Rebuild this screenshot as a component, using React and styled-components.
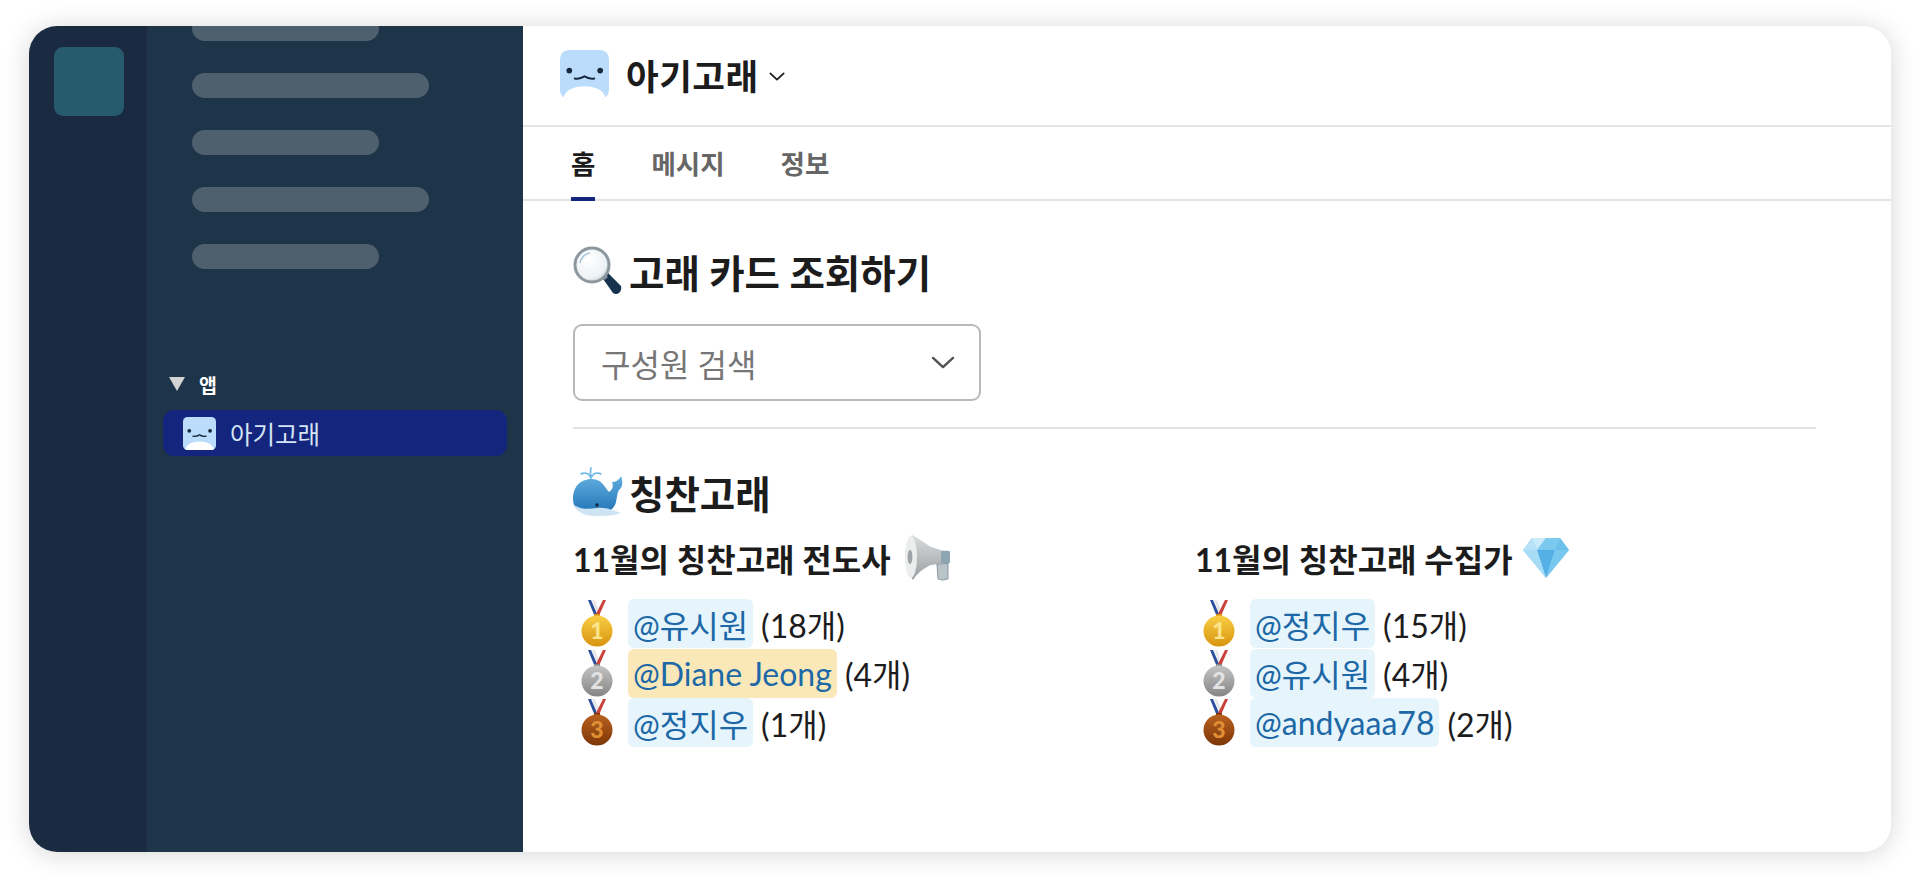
import React from "react";
import styled, { createGlobalStyle } from "styled-components";

const Global = createGlobalStyle`
  html, body { margin: 0; padding: 0; background: #fff; }
  body { font-family: Lato, "Noto Sans CJK KR", sans-serif; color: #1d1c1d; }
  * { box-sizing: border-box; }
`;
const Page = styled.div`
  width: 1920px; height: 884px; padding: 26px 29px 32px; overflow: hidden;
`;
const Win = styled.div`
  width: 1862px; height: 826px; display: flex; overflow: hidden; border-radius: 28px;
  background: #fff; box-shadow: 0 2px 26px rgba(0,0,0,.17);
`;
const Rail = styled.div`
  width: 118px; flex: none; background: #1a2a40; padding: 21px 0 0 25px;
`;
const Tile = styled.div`
  width: 70px; height: 69px; border-radius: 9px; background: #285a6e;
`;
const Side = styled.div`
  width: 376px; flex: none; background: #1e3448; display: flex; flex-direction: column;
`;
const Bars = styled.div`
  display: flex; flex-direction: column; gap: 32px; margin: -10px 0 0 45px;
`;
const Bar = styled.div`
  height: 25px; border-radius: 12.5px; background: #4e5f6e; width: ${p => p.$w}px;
`;
const AppHead = styled.div`
  display: flex; align-items: center; gap: 14px; margin: 103px 0 0 22px; height: 24px;
  color: #fff; font-size: 19.5px; font-weight: 700;
`;
const Tri = styled.span`
  width: 0; height: 0; border-left: 8px solid transparent; border-right: 8px solid transparent;
  border-top: 14px solid #d4d4d4;
`;
const AppRow = styled.div`
  display: flex; align-items: center; gap: 14px; height: 46px; margin: 14px 16px 0 16px;
  padding-left: 20px; border-radius: 11px; background: #14257d; color: #d5e4f3; font-size: 24.5px;
`;
const Main = styled.div`
  flex: 1; min-width: 0; background: #fff; display: flex; flex-direction: column;
`;
const Header = styled.div`
  height: 101px; flex: none; display: flex; align-items: center; padding: 0 0 2px 37px; gap: 17px;
  border-bottom: 2px solid #e4e4e4;
`;
const Title = styled.div`
  font-size: 35.5px; font-weight: 700; color: #1d1c1d; letter-spacing: .5px;
`;
const Caret = styled.span`
  display: flex; margin: 4px 0 0 -7px;
`;
const Tabs = styled.div`
  height: 74px; flex: none; display: flex; gap: 56px; padding-left: 48px; border-bottom: 2px solid #e4e4e4;
`;
const Tab = styled.div`
  height: 74px; display: flex; align-items: center; font-size: 26.5px; font-weight: 700;
  color: ${p => p.$on ? "#1d1c1d" : "#666"};
  border-bottom: 4px solid ${p => p.$on ? "#14257d" : "transparent"};
`;
const Body = styled.div`
  padding: 45px 75px 0 50px; display: flex; flex-direction: column;
`;
const Heading = styled.div`
  display: flex; align-items: center; gap: 6px; height: 50px;
  font-size: 38.5px; font-weight: 700; color: #1d1c1d;
`;
const Select = styled.div`
  width: 408px; height: 77px; margin-top: 28px; border: 2px solid #b9b9b9; border-radius: 9px;
  display: flex; align-items: center; justify-content: space-between; padding: 0 24px 0 26px;
  font-size: 32px; color: #767676;
`;
const Rule = styled.div`
  height: 2px; background: #e2e2e2; margin-top: 26px;
`;
const Second = styled(Heading)`
  margin-top: 38px;
`;
const Cols = styled.div`
  display: grid; grid-template-columns: 622px 1fr; margin-top: 18px;
`;
const Col = styled.div`
  display: flex; flex-direction: column;
`;
const ColHead = styled.div`
  display: flex; align-items: center; gap: 9px; height: 46px;
  font-size: 32px; font-weight: 700; color: #1d1c1d; white-space: nowrap;
`;
const List = styled.div`
  display: flex; flex-direction: column; margin-top: 18px;
`;
const Row = styled.div`
  display: flex; align-items: center; height: 49.5px; font-size: 32px; color: #1d1c1d; white-space: nowrap;
`;
const MedalSlot = styled.span`
  width: 55px; padding-left: 8px; flex: none; display: flex;
`;
const Mention = styled.span`
  display: inline-flex; align-items: center; height: 49px; padding: 0 5px; margin-right: 8px; border-radius: 6px;
  color: #1d68a6; background: ${p => p.$me ? "#fbe8b9" : "#e6f5fb"};
`;
const Icon = styled.svg`
  flex: none;
`;
const HornIcon = styled(Icon)`
  margin-left: 4px;
`;

const Face = ({ size, round }) => (
  <Icon width={size} height={size} viewBox="0 0 50 50">
    <defs>
      <clipPath id={`fc${size}`}><rect width="50" height="50" rx={round} /></clipPath>
    </defs>
    <g clipPath={`url(#fc${size})`}>
      <rect width="50" height="50" fill="#bcdcfb" />
      <path d="M3 50 C5 41 14 37 25 37 C36 37 45 41 47 50Z" fill="#fff" />
    </g>
    <circle cx="9.5" cy="21" r="2.9" fill="#15283d" />
    <circle cx="41" cy="21" r="2.9" fill="#15283d" />
    <path d="M15 29 Q20 30 25 27 Q30 30 35 29" fill="none" stroke="#15283d" strokeWidth="2" strokeLinecap="round" />
  </Icon>
);
const Chev = ({ w, h, sw, color }) => (
  <Icon width={w} height={h} viewBox="0 0 24 14" preserveAspectRatio="none">
    <path d="M2 2 L12 12 L22 2" fill="none" stroke={color} strokeWidth={sw} strokeLinecap="round" strokeLinejoin="round" />
  </Icon>
);
const Lens = () => (
  <Icon width="50" height="50" viewBox="0 0 50 50">
    <defs>
      <radialGradient id="lg" cx=".4" cy=".35" r=".75">
        <stop offset="0" stopColor="#fff" /><stop offset=".7" stopColor="#eef2f5" /><stop offset="1" stopColor="#b8c4cc" />
      </radialGradient>
    </defs>
    <path d="M28 30 L33 25 L48 40 Q49 44 46 47 Q43 49 40 47Z" fill="#17324f" />
    <path d="M27 29 L30 26 L35 31 L32 34Z" fill="#7d8a93" />
    <circle cx="19" cy="19" r="17" fill="url(#lg)" stroke="#8c979e" strokeWidth="3" />
    <path d="M7 17 A12 12 0 0 1 17 7" fill="none" stroke="#6fa4c2" strokeWidth="1.5" opacity=".6" />
  </Icon>
);
const Whale = () => (
  <Icon width="50" height="50" viewBox="0 0 50 50">
    <defs>
      <linearGradient id="wg" x1="0" y1="0" x2="0" y2="1">
        <stop offset="0" stopColor="#62aee0" /><stop offset="1" stopColor="#1f73b5" />
      </linearGradient>
    </defs>
    <path d="M18 11 Q15 4 8 7 M18 11 Q17 5 18 1 M18 11 Q21 4 28 7" fill="none" stroke="#6fbbe6" strokeWidth="1.8" strokeLinecap="round" strokeDasharray="3 1.5" />
    <path d="M0 32 C0 18 9 12 19 12 C29 12 32 21 36 25 C39 23 41 20 39 15 C43 15 46 13 48 9 C50 14 50 20 46 23 C44 26 44 31 43 35 C41 44 32 47 22 47 C8 47 0 43 0 32Z" fill="url(#wg)" />
    <path d="M1 38 C8 43 17 42 24 41 C30 40 38 42 48 46 C40 49 30 49 22 49 C11 49 4 45 1 38Z" fill="#cfe4f3" />
    <circle cx="24" cy="38" r="1.7" fill="#12263a" />
  </Icon>
);
const Horn = () => (
  <HornIcon width="48" height="48" viewBox="0 0 48 46" preserveAspectRatio="none">
    <defs>
      <linearGradient id="hg" x1="0" y1="0" x2="0" y2="1">
        <stop offset="0" stopColor="#d9dcdd" /><stop offset="1" stopColor="#9a9fa1" />
      </linearGradient>
    </defs>
    <path d="M8 1 Q14 4 26 12 L45 18 L45 27 L26 30 Q14 36 9 44 Q1 34 1 22 Q1 8 8 1Z" fill="url(#hg)" />
    <ellipse cx="7" cy="22" rx="6" ry="20" fill="#eceeee" />
    <ellipse cx="6" cy="22" rx="2.4" ry="7" fill="#9ea3a5" />
    <rect x="37" y="16" width="9" height="12" rx="1.5" fill="#8ea6b3" />
    <path d="M33 29 L44 28 L44 43 Q38 45 34 43Z" fill="#b9c4c9" stroke="#8b979d" strokeWidth="1" />
  </HornIcon>
);
const Gem = () => (
  <Icon width="48" height="42" viewBox="0 0 48 42">
    <path d="M10 1 L38 1 L47 13 L24 41 L1 13Z" fill="#8fd0f2" />
    <path d="M10 1 L1 13 L15 13Z" fill="#b6e2f8" />
    <path d="M38 1 L47 13 L33 13Z" fill="#6cc0ec" />
    <path d="M15 13 L33 13 L24 41Z" fill="#55b0e6" />
    <path d="M1 13 L15 13 L24 41Z" fill="#a6dcf6" />
    <path d="M33 13 L47 13 L24 41Z" fill="#79c8ef" />
    <path d="M10 1 L24 1 L15 13Z" fill="#c9ebfb" />
    <path d="M24 1 L38 1 L33 13 L15 13Z" fill="#7cc9f0" />
  </Icon>
);
const medals = {
  1: ["#f8cf45", "#d9930f", "#fbe48a"],
  2: ["#c4c4c4", "#858585", "#e2e2e2"],
  3: ["#b8621f", "#7d3607", "#e08f35"],
};
const Medal = ({ n, id }) => {
  const [a, b, t] = medals[n];
  return (
    <Icon width="32" height="47" viewBox="0 0 32 47">
      <defs>
        <linearGradient id={id} x1="0" y1="0" x2="0" y2="1">
          <stop offset="0" stopColor={a} /><stop offset="1" stopColor={b} />
        </linearGradient>
      </defs>
      <path d="M7 0 L10 0 L17 16 L14 17Z" fill="#2b4f9c" />
      <path d="M11 0 L14 0 L18 10 L16 13Z" fill="#e8e8e8" />
      <path d="M25 0 L22 0 L14 16 L17 18Z" fill="#c9413a" />
      <rect x="13" y="14" width="6" height="4" fill={b} />
      <circle cx="16" cy="31" r="15.5" fill={`url(#${id})`} />
      <text x="16" y="39" textAnchor="middle" fontFamily="Lato, sans-serif" fontWeight="900" fontSize="23" fill={t}>{n}</text>
    </Icon>
  );
};

const Entry = ({ n, id, name, count, me }) => (
  <Row>
    <MedalSlot><Medal n={n} id={id} /></MedalSlot>
    <Mention $me={me}>{name}</Mention>
    <span>({count}개)</span>
  </Row>
);

export default function App() {
  return (
    <Page>
      <Global />
      <Win>
        <Rail><Tile /></Rail>
        <Side>
          <Bars>
            <Bar $w={187} /><Bar $w={237} /><Bar $w={187} /><Bar $w={237} /><Bar $w={187} />
          </Bars>
          <AppHead><Tri />앱</AppHead>
          <AppRow><Face size={33} round={7} />아기고래</AppRow>
        </Side>
        <Main>
          <Header>
            <Face size={49} round={9} />
            <Title>아기고래</Title>
            <Caret><Chev w={16} h={9} sw={2.6} color="#1d1c1d" /></Caret>
          </Header>
          <Tabs>
            <Tab $on>홈</Tab><Tab>메시지</Tab><Tab>정보</Tab>
          </Tabs>
          <Body>
            <Heading><Lens />고래 카드 조회하기</Heading>
            <Select>구성원 검색<Chev w={24} h={13} sw={2.4} color="#555" /></Select>
            <Rule />
            <Second><Whale />칭찬고래</Second>
            <Cols>
              <Col>
                <ColHead>11월의 칭찬고래 전도사<Horn /></ColHead>
                <List>
                  <Entry n={1} id="a1" name="@유시원" count={18} />
                  <Entry n={2} id="a2" name="@Diane Jeong" count={4} me />
                  <Entry n={3} id="a3" name="@정지우" count={1} />
                </List>
              </Col>
              <Col>
                <ColHead>11월의 칭찬고래 수집가<Gem /></ColHead>
                <List>
                  <Entry n={1} id="b1" name="@정지우" count={15} />
                  <Entry n={2} id="b2" name="@유시원" count={4} />
                  <Entry n={3} id="b3" name="@andyaaa78" count={2} />
                </List>
              </Col>
            </Cols>
          </Body>
        </Main>
      </Win>
    </Page>
  );
}
